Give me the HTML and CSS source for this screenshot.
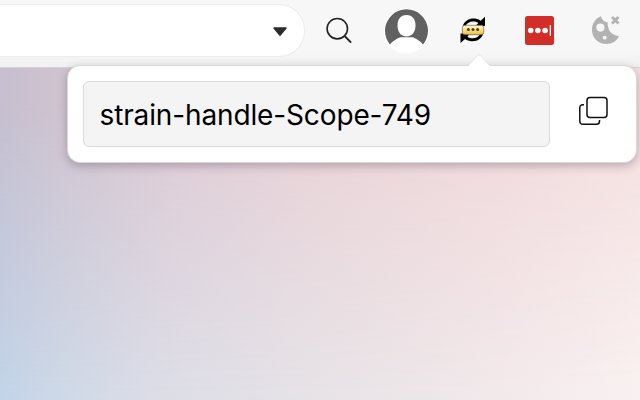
FILE: index.html
```html
<!DOCTYPE html>
<html lang="en">
<head>
<meta charset="utf-8">
<title>Password generator</title>
<link rel="stylesheet" href="styles.css">
</head>
<body>
<header class="toolbar">
  <div class="address"><svg class="caret" width="16" height="10" viewBox="0 0 16 10"><path d="M2 1h12L8 8.2z" fill="#2b2b2b" stroke="#2b2b2b" stroke-width="1.4" stroke-linejoin="round"/></svg></div>
  <svg class="search" width="28" height="28" viewBox="0 0 28 28" fill="none" stroke="#222"><circle cx="12.300" cy="11.700" r="10.200" stroke-width="1.600"/><path d="M19.600 19l6.500 6.600" stroke-width="1.900"/></svg>
  <svg class="avatar" width="46" height="46" viewBox="0 0 46 46"><circle cx="22.500" cy="23" r="22.600" fill="#fff"/><path d="M6 36.600A21.500 21.500 0 1 1 39 36.600C36.500 33 33.500 31.500 28.800 29.200H16.200C11.500 31.500 8.500 33 6 36.600z" fill="#616161"/><path d="M22.500 7c6 0 9 4.200 9 10.500C31.500 24 28 28.400 22.500 28.400S13.500 24 13.500 17.500C13.500 11.200 16.500 7 22.500 7z" fill="#fff"/></svg>
  <svg class="sync" width="28" height="30" viewBox="0 0 28 30">
    <defs><linearGradient id="gold" x1="0" y1="0" x2="0" y2="1"><stop offset="0" stop-color="#fff8dc"/><stop offset=".45" stop-color="#f8e18b"/><stop offset="1" stop-color="#edc03f"/></linearGradient></defs>
    <path d="M3.800 11C5.500 5.500 11 2.800 17.200 3.800Q20 4.300 21.700 5.700L26 1.800V11H16.500L19.400 8C14.500 5 8.500 6.800 6.500 11z" fill="#000"/>
    <path d="M24 19C22.500 24.500 17 27 11 26Q8 25.500 6 24L1.500 28V18.600H11L8.400 21.800C13 24.700 19 23.300 21.200 19z" fill="#000"/>
    <rect x="3.300" y="10.300" width="21.400" height="9.400" rx="2.500" fill="url(#gold)" stroke="#5c5138" stroke-width=".6"/>
    <g fill="#51401f"><circle cx="9.400" cy="14.500" r="1.500"/><circle cx="14" cy="14.500" r="1.500"/><circle cx="18.600" cy="14.500" r="1.500"/></g>
  </svg>
  <svg class="vault" width="29" height="29" viewBox="0 0 29 29"><rect width="29" height="29" rx="2.500" fill="#d32d27"/><g fill="#fff"><circle cx="5.700" cy="14.500" r="2.800"/><circle cx="12.900" cy="14.500" r="2.800"/><circle cx="20.100" cy="14.500" r="2.800"/><rect x="24.700" y="9" width="1.300" height="11" rx=".5"/></g></svg>
  <svg class="cookie" width="30" height="30" viewBox="0 0 30 30"><path d="M9.800 1.200C11 4 12.500 6.800 16.500 7.200C16.800 12.500 18 15.300 19.500 17.200C22 19.600 25 20.800 28 21C26 26 21 29 15.500 29C7.500 29 1 23 1 15C1 8.300 4.500 3.300 9.800 1.200z" fill="#b2b2b2"/><circle cx="9.400" cy="12.600" r="4.100" fill="#f7f7f7"/><circle cx="13.700" cy="22.700" r="1.900" fill="#f7f7f7"/><path d="M21 2l6.500 6.500M27.500 2L21 8.500" stroke="#b2b2b2" stroke-width="2.800"/></svg>
</header>
<main class="page">
  <section class="popup">
    <svg class="arrow" width="24" height="13" viewBox="0 0 24 13"><path d="M0 13L10.500 1.500Q12 0 13.500 1.500L24 13z" fill="#fff"/><path d="M1 12L10.500 1.500Q12 0 13.500 1.500L23 12" fill="none" stroke="#dedede" stroke-width=".8"/></svg>
    <div class="field"><span class="password">strain-handle-Scope-749</span></div>
    <svg class="copy" width="30" height="30" viewBox="0 0 30 30" fill="none" stroke="#111" stroke-width="1.500"><rect x="9" y="1.500" width="20" height="20" rx="3"/><path d="M6 8.700H4.800Q1.800 8.700 1.800 11.700V25Q1.800 28.300 5.100 28.300H18.300Q21.500 28.300 21.500 25.200V24"/></svg>
  </section>
</main>
</body>
</html>
```
FILE: styles.css
```css
* { box-sizing: border-box; }
body {
  margin: 0;
  width: 640px;
  height: 400px;
  overflow: hidden;
  font-family: Inter, "Liberation Sans", sans-serif;
}
svg { display: block; flex: none; }
.toolbar {
  display: flex;
  align-items: flex-start;
  height: 68px;
  padding-top: 4px;
  background: linear-gradient(#f7f7f7 75%, #f1f1f1);
  border-bottom: 1px solid #d6d3d6;
}
.address {
  display: flex;
  align-items: center;
  justify-content: flex-end;
  width: 305px;
  height: 53px;
  padding-right: 17px;
  background: #fff;
  border: 1px solid #ececec;
  border-left: 0;
  border-radius: 0 26px 26px 0;
}
.caret { margin: 2px -.5px 0 0; }
.search { margin: 13px 0 0 20px; }
.avatar { margin: 4px 0 0 31px; }
.sync { margin: 11px 0 0 29px; }
.vault { margin: 12px 0 0 38px; }
.cookie { margin: 11px 0 0 37px; }
.page {
  display: flow-root;
  position: relative;
  height: 332px;
  padding: 0 3px 0 67px;
  background: linear-gradient(90deg, #c6bfcf 0, #d1c3d0 10%, #dfcbd5 28%, #e9d1d6 48%, #f1d8da 75%, #f5dfdf 100%);
}
.page::before {
  content: "";
  position: absolute;
  inset: 0;
  background: linear-gradient(90deg, #c2d4e9 0, #ced9e7 10%, #dcdde7 25%, #e7e3e7 50%, #f2e9eb 78%, #f9f1f1 100%);
  mask-image: linear-gradient(#0000 10%, #0006 45%, #000 100%);
}
.popup {
  position: relative;
  display: flex;
  align-items: flex-start;
  height: 98px;
  margin-top: -3px;
  padding: 15px 0 0 15px;
  background: #fff;
  border: 1px solid #d8d8d8;
  border-radius: 13px;
  box-shadow: 0 3px 10px rgba(60, 40, 60, .3);
}
.arrow {
  position: absolute;
  left: 399px;
  top: -12px;
}
.field {
  display: flex;
  align-items: center;
  width: 467px;
  height: 66px;
  padding: 2px 0 0 15.5px;
  background: #f4f4f4;
  border: 1px solid #dadada;
  border-radius: 6px;
}
.password {
  color: #000;
  font-size: 28px;
  line-height: 34px;
  letter-spacing: -.13px;
  white-space: nowrap;
}
.copy { margin: 15px 0 0 28px; }
```
